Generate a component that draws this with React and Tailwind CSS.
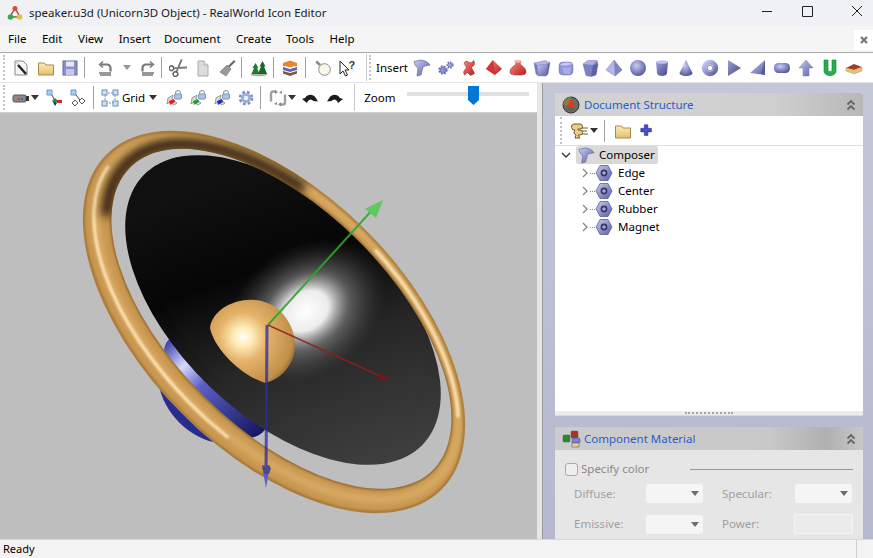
import React from 'react';

const Ic = ({ children, size = 18, className = '' }) => (
  <svg width={size} height={size} viewBox="0 0 18 18" className={`shrink-0 ${className}`}>
    {children}
  </svg>
);

const Sep = ({ className = 'h-6' }) => <div className={`w-px shrink-0 bg-[#a0a0a0] ${className}`} />;
const Grip = () => <div className="h-full w-0 border-l-2 border-dotted border-[#c4c4c4]" />;
const Caret = ({ className = '' }) => (
  <svg width="8" height="5" viewBox="0 0 8 5" className={`shrink-0 ${className}`}>
    <path d="M0 0h8L4 5z" fill="#333" />
  </svg>
);

const Defs = () => (
  <svg width="0" height="0" className="absolute">
    <defs>
      <linearGradient id="pur" x1="0" y1="0" x2="1" y2="1">
        <stop offset="0" stopColor="#c9ccf2" />
        <stop offset="1" stopColor="#5a5ea6" />
      </linearGradient>
      <linearGradient id="purd" x1="0" y1="0" x2="1" y2="1">
        <stop offset="0" stopColor="#9a9edc" />
        <stop offset="1" stopColor="#44487f" />
      </linearGradient>
      <radialGradient id="sph" cx="0.4" cy="0.35" r="0.7">
        <stop offset="0" stopColor="#c9ccf5" />
        <stop offset="1" stopColor="#4f5399" />
      </radialGradient>
      <linearGradient id="red" x1="0" y1="0" x2="1" y2="1">
        <stop offset="0" stopColor="#ff8a8a" />
        <stop offset="1" stopColor="#b81c1c" />
      </linearGradient>
      <linearGradient id="fold" x1="0" y1="0" x2="0" y2="1">
        <stop offset="0" stopColor="#fbeeb8" />
        <stop offset="1" stopColor="#e2bf6a" />
      </linearGradient>
      <linearGradient id="coneFill" gradientUnits="userSpaceOnUse" x1="170" y1="240" x2="440" y2="380">
        <stop offset="0" stopColor="#101010" />
        <stop offset="0.3" stopColor="#060606" />
        <stop offset="0.6" stopColor="#262626" />
        <stop offset="1" stopColor="#3e3e3e" />
      </linearGradient>
      <radialGradient id="coneGlow">
        <stop offset="0" stopColor="#fff" stopOpacity="1" />
        <stop offset="0.28" stopColor="#fff" stopOpacity="0.92" />
        <stop offset="0.55" stopColor="#aaa" stopOpacity="0.45" />
        <stop offset="1" stopColor="#555" stopOpacity="0" />
      </radialGradient>
      <radialGradient id="domeFill" gradientUnits="userSpaceOnUse" cx="243" cy="337" r="58">
        <stop offset="0" stopColor="#ffffff" />
        <stop offset="0.16" stopColor="#ffedb8" />
        <stop offset="0.42" stopColor="#e4b268" />
        <stop offset="0.85" stopColor="#c08f4a" />
        <stop offset="1" stopColor="#7f5a25" />
      </radialGradient>
      <linearGradient id="magBand" x1="0" y1="0" x2="1" y2="0">
        <stop offset="0" stopColor="#3a3ea8" />
        <stop offset="0.22" stopColor="#d6daff" />
        <stop offset="0.42" stopColor="#5a60c8" />
        <stop offset="1" stopColor="#14165c" />
      </linearGradient>
      <clipPath id="ringClip">
        <path
          clipRule="evenodd"
          d="M37 322a237 130 0 1 0 474 0a237 130 0 1 0-474 0zM63 314.500a214 109.500 0 1 0 428 0a214 109.500 0 1 0-428 0z"
        />
      </clipPath>
      <filter id="soft"><feGaussianBlur stdDeviation="1.300" /></filter>
      <filter id="soft2"><feGaussianBlur stdDeviation="3" /></filter>
      <filter id="soft3"><feGaussianBlur stdDeviation="5" /></filter>
    </defs>
  </svg>
);

/* ---- small toolbar icons ---- */
const NewDoc = () => (
  <Ic>
    <path d="M3 2h8l4 4v10H3z" fill="#f3f3f3" stroke="#8a8a8a" />
    <path d="M6 6l8 9" stroke="#222" strokeWidth="2.400" />
    <path d="M4 3l2 2" stroke="#d8d8d8" strokeWidth="2" />
  </Ic>
);
const Folder = () => (
  <Ic>
    <path d="M1.500 4h6l1.500 2h7.500v10h-15z" fill="url(#fold)" stroke="#a98a45" />
  </Ic>
);
const Save = () => (
  <Ic>
    <rect x="2" y="2" width="14" height="14" fill="#8b8fc9" stroke="#666a9e" />
    <rect x="5" y="2.500" width="8" height="5" fill="#e7e8f6" />
    <rect x="5" y="10" width="8" height="6" fill="#c6c8e6" />
  </Ic>
);
const Undo = ({ flip }) => (
  <Ic>
    <g transform={flip ? 'translate(18 0) scale(-1 1)' : undefined} fill="none" stroke="#777">
      <path d="M3 14h12M4 16h11" strokeWidth="1.400" />
      <path d="M14.500 12.500V9a3.500 3.500 0 0 0-3.500-3.500H5" strokeWidth="2.200" />
      <path d="M7 2.500L3.500 5.500 7 8.500" strokeWidth="1.500" />
    </g>
  </Ic>
);
const Scissors = () => (
  <Ic>
    <g transform="rotate(-35 9 9)">
      <path d="M17 4L6 11M17 14L6 7" stroke="#777" strokeWidth="1.800" />
      <circle cx="3.500" cy="12.500" r="2.300" fill="none" stroke="#666" strokeWidth="1.500" />
      <circle cx="3.500" cy="5.500" r="2.300" fill="none" stroke="#666" strokeWidth="1.500" />
    </g>
  </Ic>
);
const CopyDoc = () => (
  <Ic>
    <path d="M4 2h6l4 4v11H4z" fill="#dcdcdc" stroke="#aaa" />
    <path d="M10 2v4h4" fill="#f2f2f2" stroke="#aaa" />
  </Ic>
);
const Brush = () => (
  <Ic>
    <path d="M10 7l6-6 1.500 1.500-6 6z" fill="#666" />
    <path d="M9 6l4 4-5 7-6-4z" fill="#9a9a9a" stroke="#666" strokeWidth=".6" />
  </Ic>
);
const Trees = () => (
  <Ic>
    <ellipse cx="9" cy="15.500" rx="8.500" ry="1.800" fill="#b9b39a" />
    <path d="M5.500 4l3 5H7l2.500 6H1.500L4 9H2.500z" fill="#1f7a32" />
    <path d="M12.500 2l3 5.500H14l3 7.500H8l3-7.500H9.500z" fill="#16672a" />
  </Ic>
);
const Books = () => (
  <Ic>
    <path d="M2 4l7-2.500 7 2.500v3l-7 2-7-2z" fill="#e8852e" />
    <path d="M2 8l7 2 7-2v3l-7 2-7-2z" fill="#5a68b8" />
    <path d="M2 12l7 2 7-2v2.500l-7 2.500-7-2.500z" fill="#7e5a3a" />
    <path d="M4 7.500l5 1.500 5-1.500" stroke="#fff" fill="none" />
  </Ic>
);
const Bulb = () => (
  <Ic>
    <circle cx="10.500" cy="10.500" r="5.800" fill="#fbf8ea" stroke="#8a8a80" />
    <path d="M3 1.500l4 3.500-2 2L1.500 3.500z" fill="#8a8a80" />
  </Ic>
);
const HelpArrow = () => (
  <Ic>
    <path d="M2 2v13l3-3 2.500 5 2-1-2.500-5h4z" fill="#fff" stroke="#222" />
    <text x="10.500" y="10" fontSize="11" fontWeight="700" fill="#333" fontFamily="Liberation Sans, sans-serif">?</text>
  </Ic>
);
const Camera = () => (
  <Ic>
    <rect x="1" y="6" width="13" height="7" rx="1.500" fill="#8a8a8a" stroke="#555" />
    <rect x="14" y="7" width="3" height="5" fill="#333" />
    <rect x="6" y="9" width="2" height="2" fill="#d33" />
    <rect x="9" y="9" width="2" height="2" fill="#36c" />
  </Ic>
);
const AxesA = () => (
  <Ic>
    <path d="M2 1h5v5H2z" fill="#a8cdf0" stroke="#6a9ac8" />
    <path d="M7 6l3 6" stroke="#444" />
    <path d="M10 9l3 3-3 3-3-3z" fill="#2a8a2a" />
    <path d="M12 11h5v3h-5z" fill="#d22" />
    <path d="M8 13l2 4 2-3z" fill="#22a" />
  </Ic>
);
const AxesB = () => (
  <Ic>
    <path d="M2 1h5v5H2z" fill="#a8cdf0" stroke="#6a9ac8" />
    <path d="M7 6l4 5" stroke="#444" />
    <path d="M6 11l3 3-3 3-3-3zM13 9l3 3-3 3-3-3z" fill="#fff" stroke="#555" />
  </Ic>
);
const GridIc = () => (
  <Ic>
    <rect x="4" y="4" width="10" height="10" fill="none" stroke="#6f8fb8" strokeDasharray="2 1" />
    {[[1, 1], [12, 1], [1, 12], [12, 12]].map(([x, y]) => (
      <rect key={x * 100 + y} x={x} y={y} width="5" height="5" fill="#cfe0f2" stroke="#6f8fb8" />
    ))}
  </Ic>
);
const SnapIc = ({ color }) => (
  <Ic>
    <circle cx="13" cy="4" r="2.500" fill="none" stroke="#8a8a8a" />
    <rect x="9.500" y="5" width="7" height="5" rx="1" fill="#a9c6e8" stroke="#7a96b8" />
    <path d="M3 9l5-3-1 4 5 4-3 2-4-3-3 2z" fill="#ddd" stroke="#777" strokeWidth=".7" />
    <path d="M4 12l5-2 1 3-5 3z" fill={color} />
  </Ic>
);
const Gear = () => (
  <Ic>
    <circle cx="9" cy="9" r="5.800" fill="none" stroke="#7f93bf" strokeWidth="3" strokeDasharray="2.600 2" />
    <circle cx="9" cy="9" r="5" fill="#98addb" />
    <circle cx="9" cy="9" r="2.300" fill="#eef2fb" />
  </Ic>
);
const Rotate = () => (
  <Ic>
    <path d="M7 2.500H4a2 2 0 0 0-2 2v8" fill="none" stroke="#a0a0a0" strokeWidth="2.400" />
    <path d="M11 15.500h3a2 2 0 0 0 2-2v-8" fill="none" stroke="#a0a0a0" strokeWidth="2.400" />
    <path d="M6 1l3 2-3 2zM12 13l-3 2.500 3 2zM5 15l3 1V13zM13 2l-3 1 3 2z" fill="#888" />
  </Ic>
);
const Curl = ({ flip }) => (
  <Ic>
    <path
      transform={flip ? 'translate(18 0) scale(-1 1)' : undefined}
      d="M1 10l3-1c3-4.500 8-4 10.500-.500L17 12.500l-4.500-.500c-2-2-4-2-5.500 0l-1 2z"
      fill="#1c1c1c"
    />
  </Ic>
);

/* ---- insert bar shapes ---- */
const Composer = ({ size }) => (
  <Ic size={size}>
    <path d="M1 2.500L8 1c4 .500 7 2 9 5l-5 1-2 1-2 8-4 1 1-8C3 8 1.500 5.500 1 2.500z" fill="url(#pur)" stroke="#555a90" strokeWidth=".6" strokeLinejoin="round" />
  </Ic>
);
const Gears = () => (
  <Ic>
    <circle cx="6" cy="11" r="3.500" fill="#8b8fd0" stroke="#6a6eb0" strokeWidth="2.400" strokeDasharray="1.600 1.200" />
    <circle cx="13" cy="6" r="2.600" fill="#a5a8e0" stroke="#6a6eb0" strokeWidth="2" strokeDasharray="1.400 1" />
  </Ic>
);
const RedX = () => (
  <Ic>
    <path d="M5 2l5 2 3-2.500.500 4-3 3 3 6-4 2-3-3-3 2.500-1-3 3-4.500L3 4z" fill="url(#red)" stroke="#8c1414" strokeWidth=".5" />
  </Ic>
);
const RedPyr = () => (
  <Ic>
    <path d="M8 1l9 9-7 6-9-6z" fill="url(#red)" />
    <path d="M8 1l2 15-9-6z" fill="#d53434" />
  </Ic>
);
const Vase = () => (
  <Ic>
    <path d="M6 2h6l-1 3c2 2 6 4 6 8 0 3-4 3-8 3s-8 0-8-3c0-4 4-6 6-8z" fill="url(#red)" stroke="#9c1c1c" strokeWidth=".5" />
    <ellipse cx="9" cy="2.500" rx="3.500" ry="1.200" fill="#ffb0b0" />
  </Ic>
);
const Box = () => (
  <Ic>
    <g strokeLinejoin="round" stroke="#6a6ea8" strokeWidth=".4">
      <path d="M1 4l11-2.500 5 2-2 1.500-11 1.500z" fill="#b4b7ea" />
      <path d="M1 4l3 2.500 1.500 10.500L3 15z" fill="#7a7ec0" />
      <path d="M4 6.500L15 5l-2 12-7.500 0z" fill="url(#pur)" />
      <path d="M15 5l2-1.500-2 11.500-2 2z" fill="#5d61a8" />
    </g>
  </Ic>
);
const RoundBox = () => (
  <Ic>
    <rect x="2" y="3" width="14" height="13" rx="4" fill="#9094d6" stroke="#6a6ea8" strokeWidth=".5" />
    <path d="M3 6c3-3 9-3 12-1-3 2-9 2-12 1z" fill="#c5c8f2" />
    <path d="M5 8c3 1 6 1 9 0l-1 7H7z" fill="#a9ace6" />
  </Ic>
);
const DarkBox = () => (
  <Ic>
    <path d="M2 5l5-3.500h9L17 5l-2 11-5 1.500-5-1z" fill="#7d81c2" stroke="#5a5ea0" strokeWidth=".4" />
    <path d="M2 5l5-3.500h9L12 6z" fill="#aeb1e6" />
    <path d="M12 6l5-1-2 11-5 1.500z" fill="#5d61a8" />
  </Ic>
);
const Pyramid = () => (
  <Ic>
    <path d="M9 1l8 10-7 6-9-6z" fill="#b3b6e6" stroke="#7a7eb8" strokeWidth=".5" />
    <path d="M9 1l1 16 7-6z" fill="#7f83c4" />
  </Ic>
);
const Sphere = () => (
  <Ic>
    <circle cx="9" cy="9" r="8" fill="url(#sph)" />
  </Ic>
);
const Cylinder = () => (
  <Ic>
    <path d="M3 3l1 11c0 4 10 4 10 0l1-11z" fill="url(#purd)" />
    <ellipse cx="9" cy="3" rx="6" ry="1.800" fill="#c0c3ee" />
  </Ic>
);
const Cone = () => (
  <Ic>
    <path d="M9 1l6.500 13c0 4-13 4-13 0z" fill="url(#sph)" />
  </Ic>
);
const Torus = () => (
  <Ic>
    <circle cx="9" cy="9" r="5.800" fill="none" stroke="url(#pur)" strokeWidth="4.800" />
    <circle cx="9" cy="9" r="2.800" fill="#fff" stroke="#555a90" strokeWidth=".7" />
  </Ic>
);
const Wedge = () => (
  <Ic>
    <path d="M3 1l13 8-13 8z" fill="url(#purd)" />
  </Ic>
);
const Wedge2 = () => (
  <Ic>
    <path d="M16 1v15l-15-2z" fill="url(#pur)" />
    <path d="M16 1v15l-4-1z" fill="#555a99" />
  </Ic>
);
const Capsule = () => (
  <Ic>
    <rect x="1" y="4" width="16" height="10" rx="4.500" fill="url(#sph)" />
  </Ic>
);
const ArrowUp = () => (
  <Ic>
    <path d="M9 1l7 8h-4v8H6V9H2z" fill="url(#pur)" stroke="#7a7eb8" strokeWidth=".5" />
  </Ic>
);
const GreenU = () => (
  <Ic>
    <path d="M3 1h4v10c0 2 4 2 4 0V1h4v11c0 6-12 6-12 0z" fill="#22b14c" stroke="#0f7a30" strokeWidth=".6" />
  </Ic>
);
const House = () => (
  <Ic>
    <path d="M1 9l8-4 8 3-8 3z" fill="#a83a2a" />
    <path d="M1 9l8 2 8-3v4l-8 3-8-3z" fill="#e0c47a" stroke="#a8894a" strokeWidth=".4" />
  </Ic>
);
const Nut = () => (
  <Ic>
    <path d="M5 1.500h8L17 9l-4 7.500H5L1 9z" fill="url(#pur)" stroke="#4f5390" strokeWidth=".7" strokeLinejoin="round" />
    <circle cx="9" cy="9" r="3.400" fill="#33365f" />
    <circle cx="9" cy="9" r="1.800" fill="#a5a8d0" />
  </Ic>
);
const Plus = () => (
  <Ic size={16}>
    <path d="M6 2h4v4h4v4h-4v4H6v-4H2V6h4z" fill="#4a4ecb" stroke="#2a2c80" strokeWidth=".6" />
  </Ic>
);
const Bones = () => (
  <Ic>
    <path d="M3 2h6a2 2 0 0 1 0 5H7v1h2a2 2 0 0 1 0 5H7l2 3H4l1-3a3 3 0 0 1-2-3 3 3 0 0 1 1-2 3 3 0 0 1-1-6z" fill="#e9cf8a" stroke="#6b5a2a" />
    <path d="M11 6h6M11 9h5M11 12h6" stroke="#6b5a2a" />
  </Ic>
);
const DocBall = () => (
  <svg width="18" height="18" viewBox="0 0 18 18" className="shrink-0">
    <circle cx="9" cy="9" r="8" fill="#6f6a5c" stroke="#333" />
    <path d="M1 9a8 8 0 0 1 8-8v8z" fill="#8a7a4a" />
    <path d="M9 3l4 8H5z" fill="#e03a1a" />
    <path d="M4 13a8 8 0 0 0 10 0l-5-2z" fill="#4a6a5a" />
  </svg>
);
const Paints = () => (
  <svg width="20" height="18" viewBox="0 0 20 18" className="shrink-0">
    <rect x="9" y="1" width="7" height="7" rx="1" fill="#a8332a" stroke="#555" strokeWidth=".5" />
    <rect x="1" y="5" width="7" height="7" rx="1" fill="#2a8a2a" stroke="#555" strokeWidth=".5" />
    <rect x="10" y="8" width="8" height="5" rx="1" fill="#7a7ee8" stroke="#555" strokeWidth=".5" />
    <rect x="10" y="13" width="7" height="4" fill="#e6cf90" stroke="#555" strokeWidth=".5" />
  </svg>
);
const Chevrons = () => (
  <svg width="10" height="12" viewBox="0 0 10 12" fill="none" stroke="#666" strokeWidth="1.800">
    <path d="M1.500 5.500L5 2l3.500 3.500M1.500 10.500L5 7l3.500 3.500" />
  </svg>
);
const TitleLogo = () => (
  <svg width="16" height="16" viewBox="0 0 16 16" fill="none" className="shrink-0">
    <path d="M8 3L3 12h10z" stroke="#8a5a3a" strokeWidth="1.500" />
    <circle cx="8" cy="3.500" r="2.500" fill="#d84a3a" />
    <circle cx="3.500" cy="12" r="2.800" fill="#3aa84a" />
    <circle cx="12.500" cy="12" r="2.800" fill="#e8c040" />
  </svg>
);

const Speaker = () => (
  <svg viewBox="0 113 537 426" className="block h-full w-full">
    {/* magnet sits behind ring and cone */}
    <g transform="rotate(45 274 322)">
      <ellipse cx="278" cy="415" rx="60" ry="45" fill="#2a2c8c" />
      <ellipse cx="278" cy="408" rx="66" ry="34" fill="url(#magBand)" />
    </g>
    {/* cone, fuller on the upper right than a plain ellipse */}
    <ellipse cx="283" cy="310" rx="194" ry="106" transform="rotate(44 283 310)" fill="url(#coneFill)" />
    <ellipse cx="288" cy="305" rx="160" ry="102" transform="rotate(44 288 305)" fill="url(#coneFill)" />
    <ellipse cx="306" cy="311" rx="85" ry="65" transform="rotate(-35 306 311)" fill="url(#coneGlow)" />
    <g transform="rotate(45 274 322)">
      <g clipPath="url(#ringClip)">
        <ellipse cx="274" cy="322" rx="240" ry="135" fill="#c8964f" />
        {/* soft lighter middle of the tube */}
        <ellipse cx="274" cy="317" rx="226" ry="120" fill="none" stroke="#dcae68" strokeWidth="7" filter="url(#soft2)" />
        {/* bright streak along the lower left and the upper right */}
        <ellipse cx="274" cy="319" rx="228" ry="120" fill="none" stroke="#ffe9bd" strokeWidth="3" filter="url(#soft)" strokeDasharray="0 230 320 310 190 100" />
        {/* shaded inner edge over the top */}
        <ellipse cx="277" cy="314.500" rx="219" ry="115" fill="none" stroke="#2c1e0a" strokeWidth="11" filter="url(#soft3)" strokeDasharray="0 480 250 500" />
        <ellipse cx="274" cy="322" rx="236" ry="129" fill="none" stroke="#6a4a1c" strokeWidth="2" opacity=".55" filter="url(#soft)" />
        <ellipse cx="277" cy="314.500" rx="214" ry="109.500" fill="none" stroke="#5a3e16" strokeWidth="2.500" opacity=".6" filter="url(#soft)" />
      </g>
    </g>
    {/* dome */}
    <path d="M210 328C212 310 235 298 255 300C280 302 295 325 295 345C295 365 280 380 265 383C240 375 214 348 210 328Z" fill="url(#domeFill)" />
    {/* axes */}
    <path d="M268 325L374 208" stroke="#2fa52f" strokeWidth="2" opacity=".9" />
    <path d="M383 200L376 218 365 209z" fill="#5fc85f" />
    <path d="M268 325L380 376" stroke="#8f1f1f" strokeWidth="1.500" opacity=".85" />
    <path d="M389 379L378 381 381 373z" fill="#7a1515" />
    <path d="M267 325L266 475" stroke="#2a2aa8" strokeWidth="3" opacity=".75" />
    <path d="M266 488L262 465h8z" fill="#5a5ac8" />
    <path d="M262 467l5-2 4 3-2 6h-5z" fill="#4a4a8a" />
  </svg>
);

const menus = ['File', 'Edit', 'View', 'Insert', 'Document', 'Create', 'Tools', 'Help'];
const shapes = [Composer, Gears, RedX, RedPyr, Vase, Box, RoundBox, DarkBox, Pyramid, Sphere, Cylinder, Cone, Torus, Wedge, Wedge2, Capsule, ArrowUp, GreenU, House];
const parts = ['Edge', 'Center', 'Rubber', 'Magnet'];

export default function App() {
  return (
    <div
      className="relative flex h-[558px] w-[873px] flex-col overflow-hidden bg-[#f2f2f2] text-[11.500px] text-black"
      style={{ fontFamily: '"Noto Sans", "Open Sans", sans-serif' }}
    >
      <Defs />
      {/* title bar */}
      <div className="flex h-[26px] shrink-0 items-center bg-[#f0f1f4] pl-[7px]">
        <TitleLogo />
        <span className="ml-[6px] text-[#1a1a1a]">speaker.u3d (Unicorn3D Object) - RealWorld Icon Editor</span>
        <div className="ml-auto flex items-center">
          <svg width="140" height="16" viewBox="0 0 140 16" fill="none" stroke="#222">
            <path d="M29 6.500h10M69.500 1.500h10v10h-10zM119 1l10 10M129 1l-10 10" />
          </svg>
        </div>
      </div>
      {/* menu */}
      <div className="flex h-[26px] shrink-0 items-center justify-between bg-[#f5f5f5] pl-[8px]">
        <div className="flex gap-[15.500px]">
          {menus.map((m) => (
            <span key={m} className={m === 'Document' ? '-ml-[2px]' : m === 'Tools' ? '-ml-[1px]' : ''}>{m}</span>
          ))}
        </div>
        <div className="mt-[1px] flex h-[20px] w-[19px] items-center justify-center bg-white">
          <svg width="8" height="8" viewBox="0 0 8 8" stroke="#6a7080" strokeWidth="2">
            <path d="M1 1l6 6M7 1l-6 6" />
          </svg>
        </div>
      </div>
      {/* toolbar 1 */}
      <div className="flex h-[31px] shrink-0 items-center border-y border-t-[#a8a8a8] border-b-[#e4e4e4] bg-white py-[2px] pl-[3px]">
        <Grip />
        <div className="ml-[7px] flex items-center gap-[6.500px]">
          <NewDoc />
          <Folder />
          <Save />
        </div>
        <Sep className="ml-[5px] h-[21px]" />
        <div className="ml-[11px] flex items-center">
          <Undo />
          <Caret className="ml-[9px] opacity-50" />
          <div className="ml-[8px]"><Undo flip /></div>
        </div>
        <Sep className="ml-[4px] h-[21px]" />
        <div className="ml-[7px] flex items-center gap-[6.500px]">
          <Scissors />
          <CopyDoc />
          <Brush />
        </div>
        <Sep className="ml-[5px] h-[21px]" />
        <div className="ml-[8px]"><Trees /></div>
        <Sep className="ml-[5px] h-[21px]" />
        <div className="ml-[7px]"><Books /></div>
        <Sep className="ml-[6px] h-[21px]" />
        <div className="ml-[8px] flex items-center gap-[6px]">
          <Bulb />
          <HelpArrow />
        </div>
        <Sep className="ml-[10px] h-[27px] bg-[#c8c8c8]" />
        <div className="ml-[2px] h-full"><Grip /></div>
        <span className="ml-[5px]">Insert</span>
        <div className="ml-[5px] flex items-center gap-[6px]">
          {shapes.map((S, i) => (
            <S key={i} />
          ))}
        </div>
      </div>
      {/* main */}
      <div className="flex min-h-0 flex-1">
        <div className="flex w-[537px] shrink-0 flex-col">
          <div className="flex h-[30px] shrink-0 items-center border-b border-[#cfcfcf] bg-white py-[2px] pl-[3px]">
            <Grip />
            <div className="ml-[7px] flex items-center">
              <Camera />
              <Caret className="ml-[1px]" />
            </div>
            <div className="ml-[6px] flex items-center gap-[6px]">
              <AxesA />
              <AxesB />
            </div>
            <Sep className="ml-[6px] h-[23px]" />
            <div className="ml-[7px]"><GridIc /></div>
            <span className="ml-[3px]">Grid</span>
            <Caret className="ml-[4px]" />
            <div className="ml-[8px] flex items-center gap-[6px]">
              <SnapIc color="#e02020" />
              <SnapIc color="#20a030" />
              <SnapIc color="#2030c0" />
              <Gear />
            </div>
            <Sep className="ml-[5px] h-[23px]" />
            <div className="ml-[8px]"><Rotate /></div>
            <Caret className="ml-[1px]" />
            <div className="ml-[5px] flex items-center gap-[7px]">
              <Curl />
              <Curl flip />
            </div>
            <Sep className="ml-[10px] h-[27px] bg-[#c8c8c8]" />
            <span className="ml-[9px]">Zoom</span>
            <div className="relative ml-[12px] h-[4px] w-[122px] -translate-y-[4px] bg-[#e0e0e0]">
              <svg width="11" height="19" viewBox="0 0 11 19" className="absolute left-[61px] top-[-6px]">
                <path d="M0 0h11v14l-5.500 5L0 14z" fill="#0078d4" />
              </svg>
            </div>
          </div>
          <div className="min-h-0 flex-1 bg-[#bebebe]">
            <Speaker />
          </div>
        </div>
        {/* splitter */}
        <div className="w-[5px] shrink-0 bg-[#e6e6e6]" />
        {/* right side */}
        <div className="flex min-w-0 flex-1 flex-col gap-[11px] border-l border-[#9a9a9a] bg-[linear-gradient(#c3c7d6,#b5b8cf)] pl-[12px] pr-[10px] pt-[10px]">
          <div className="flex h-[323px] shrink-0 flex-col overflow-hidden rounded-t-[3px] border-b border-[#d8d8d8] bg-white">
            <div className="flex h-[23px] shrink-0 items-center bg-[linear-gradient(90deg,#d2d2d2,#d0d0d0_70%,#b8b8b8)] px-[7px]">
              <DocBall />
              <span className="ml-[4px] text-[#2a5bd0]">Document Structure</span>
              <div className="ml-auto"><Chevrons /></div>
            </div>
            <div className="flex h-[30px] shrink-0 items-center border-b border-[#dedede] pl-[5px]">
              <div className="h-full py-[1px]"><Grip /></div>
              <div className="ml-[9px] flex items-center">
                <Bones />
                <Caret className="ml-[1px]" />
              </div>
              <Sep className="ml-[6px] h-[22px]" />
              <div className="ml-[9px]"><Folder /></div>
              <div className="ml-[7px]"><Plus /></div>
            </div>
            <div className="flex flex-1 flex-col">
              <div className="flex h-[18px] items-center pl-[6px]">
                <svg width="10" height="7" viewBox="0 0 10 7" fill="none" stroke="#333" strokeWidth="1.300">
                  <path d="M1 1l4 4 4-4" />
                </svg>
                <div className="ml-[5px] flex h-[18px] w-[82px] items-center rounded-[2px] bg-[#d9d9d9] pl-[2px]">
                  <Composer size={17} />
                  <span className="ml-[4px]">Composer</span>
                </div>
              </div>
              {parts.map((p) => (
                <div key={p} className="flex h-[18px] items-center pl-[27px]">
                  <svg width="6" height="10" viewBox="0 0 6 10" fill="none" stroke="#888" strokeWidth="1.300">
                    <path d="M1 1l4 4-4 4" />
                  </svg>
                  <div className="ml-[2px] w-[5px] border-t border-dotted border-[#888]" />
                  <Nut />
                  <span className="ml-[5px]">{p}</span>
                </div>
              ))}
            </div>
            <div className="flex h-[4px] shrink-0 items-center justify-center bg-[#ececec]">
              <div className="w-[48px] border-t-2 border-dotted border-[#a8a8a8]" />
            </div>
          </div>
          <div className="min-h-0 flex-1 overflow-hidden rounded-t-[3px] bg-[#e6e6e6]">
            <div className="flex h-[23px] items-center bg-[linear-gradient(90deg,#cccccc,#c8c8c8_70%,#b0b0b0_88%,#c8c8c8)] px-[7px]">
              <Paints />
              <span className="ml-[2px] text-[#2a5bd0]">Component Material</span>
              <div className="ml-auto"><Chevrons /></div>
            </div>
            <div className="flex flex-col px-[10px] text-[#a0a0a0]">
              <div className="mt-[9px] flex h-[20px] items-center">
                <div className="h-[13px] w-[13px] rounded-[3px] border border-[#a8a8a8] bg-[#eeeeee]" />
                <span className="ml-[3px] text-[#8a8a8a]">Specify color</span>
                <div className="ml-[41px] h-px flex-1 bg-[#999]" />
              </div>
              <div className="mt-[5px] grid grid-cols-[72px_76px_73px_1fr] items-center gap-y-[11px] pl-[9px]">
                <span>Diffuse:</span>
                <div className="flex h-[19px] w-[57px] items-center justify-end rounded-[3px] bg-[#f5f5f5] pr-[4px]"><Caret className="opacity-70" /></div>
                <span>Specular:</span>
                <div className="flex h-[19px] w-[57px] items-center justify-end rounded-[3px] bg-[#f5f5f5] pr-[4px]"><Caret className="opacity-70" /></div>
                <span>Emissive:</span>
                <div className="flex h-[19px] w-[57px] items-center justify-end rounded-[3px] bg-[#f5f5f5] pr-[4px]"><Caret className="opacity-70" /></div>
                <span>Power:</span>
                <div className="-ml-px h-[20px] w-[59px] border border-[#f5f5f5] bg-[#ececec]" />
              </div>
            </div>
          </div>
        </div>
      </div>
      {/* status bar */}
      <div className="flex h-[19px] shrink-0 items-center border-t border-[#d8d8d8] bg-[#f3f3f3] pl-[3px] text-[11px]">
        <span>Ready</span>
        <div className="ml-auto h-full w-[17px] border-l border-[#d0d0d0]" />
      </div>
    </div>
  );
}
